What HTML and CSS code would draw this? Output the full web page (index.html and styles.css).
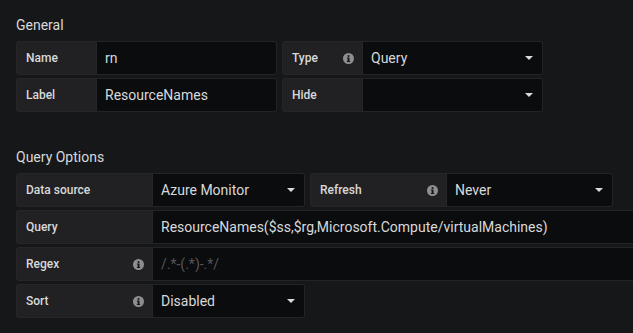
FILE: index.html
```html
<!DOCTYPE html>
<html>
<head>
<meta charset="utf-8">
<link rel="stylesheet" href="styles.css">
</head>
<body>
<div class="page">
  <h5 class="section-title">General</h5>
  <div class="rows">
    <div class="row">
      <div class="field">
        <div class="label w-sm">Name</div>
        <div class="input w-md">rn</div>
      </div>
      <div class="field">
        <div class="label w-sm">Type<svg class="info" viewBox="0 0 11 11"><circle cx="5.5" cy="5.5" r="5.5"/><rect x="4.6" y="4.6" width="1.9" height="4" fill="#161719"/><rect x="3.9" y="8" width="3.3" height="1" fill="#161719"/><rect x="3.9" y="4.6" width="1.5" height="0.9" fill="#161719"/><circle cx="5.55" cy="3" r="1.05" fill="#161719"/></svg></div>
        <div class="input select w-md">Query<svg class="caret" viewBox="0 0 8 4"><polygon points="0,0 8,0 4,4"/></svg></div>
      </div>
    </div>
    <div class="row">
      <div class="field">
        <div class="label w-sm">Label</div>
        <div class="input w-md">ResourceNames</div>
      </div>
      <div class="field">
        <div class="label w-sm">Hide</div>
        <div class="input select w-md"><svg class="caret" viewBox="0 0 8 4"><polygon points="0,0 8,0 4,4"/></svg></div>
      </div>
    </div>
  </div>

  <h5 class="section-title second">Query Options</h5>
  <div class="rows">
    <div class="row">
      <div class="field">
        <div class="label w-lg">Data source</div>
        <div class="input select w-ds">Azure Monitor<svg class="caret" viewBox="0 0 8 4"><polygon points="0,0 8,0 4,4"/></svg></div>
      </div>
      <div class="field">
        <div class="label w-lg">Refresh<svg class="info" viewBox="0 0 11 11"><circle cx="5.5" cy="5.5" r="5.5"/><rect x="4.6" y="4.6" width="1.9" height="4" fill="#161719"/><rect x="3.9" y="8" width="3.3" height="1" fill="#161719"/><rect x="3.9" y="4.6" width="1.5" height="0.9" fill="#161719"/><circle cx="5.55" cy="3" r="1.05" fill="#161719"/></svg></div>
        <div class="input select w-rf">Never<svg class="caret" viewBox="0 0 8 4"><polygon points="0,0 8,0 4,4"/></svg></div>
      </div>
    </div>
    <div class="row">
      <div class="field">
        <div class="label w-lg">Query</div>
        <div class="input w-full">ResourceNames($ss,$rg,Microsoft.Compute/virtualMachines)</div>
      </div>
    </div>
    <div class="row">
      <div class="field">
        <div class="label w-lg">Regex<svg class="info" viewBox="0 0 11 11"><circle cx="5.5" cy="5.5" r="5.5"/><rect x="4.6" y="4.6" width="1.9" height="4" fill="#161719"/><rect x="3.9" y="8" width="3.3" height="1" fill="#161719"/><rect x="3.9" y="4.6" width="1.5" height="0.9" fill="#161719"/><circle cx="5.55" cy="3" r="1.05" fill="#161719"/></svg></div>
        <div class="input w-full placeholder">/.*-(.*)-.*/</div>
      </div>
    </div>
    <div class="row">
      <div class="field">
        <div class="label w-lg">Sort<svg class="info" viewBox="0 0 11 11"><circle cx="5.5" cy="5.5" r="5.5"/><rect x="4.6" y="4.6" width="1.9" height="4" fill="#161719"/><rect x="3.9" y="8" width="3.3" height="1" fill="#161719"/><rect x="3.9" y="4.6" width="1.5" height="0.9" fill="#161719"/><circle cx="5.55" cy="3" r="1.05" fill="#161719"/></svg></div>
        <div class="input select w-ds">Disabled<svg class="caret" viewBox="0 0 8 4"><polygon points="0,0 8,0 4,4"/></svg></div>
      </div>
    </div>
  </div>
</div>
</body>
</html>
```

FILE: styles.css
```css
html, body {
  margin: 0;
  padding: 0;
  background: #161719;
  overflow: hidden;
}
body {
  font-family: Roboto, "Liberation Sans", sans-serif;
  color: #d8d9da;
  width: 633px;
  height: 333px;
}
.page {
  padding: 17px 0 0 16px;
}
.section-title {
  margin: 0 0 7px 0;
  font-size: 14px;
  line-height: 17px;
  font-weight: 400;
  color: #d8d9da;
}
.section-title.second {
  margin-top: 37px;
}
.rows {
  display: flex;
  flex-direction: column;
  gap: 3px;
}
.row {
  display: flex;
  gap: 5px;
}
.field {
  display: flex;
  height: 34px;
}
.label {
  box-sizing: border-box;
  height: 34px;
  display: flex;
  align-items: center;
  justify-content: space-between;
  padding: 0 8px 0 9px;
  background: #212124;
  border: 1px solid #262628;
  border-radius: 3px 0 0 3px;
  font-size: 12px;
  font-weight: 500;
  color: #d8d9da;
}
.input {
  box-sizing: border-box;
  height: 34px;
  display: flex;
  align-items: center;
  justify-content: space-between;
  padding: 0 9px 0 8px;
  background: #0b0c0e;
  border: 1px solid #222426;
  border-left: none;
  border-radius: 0 3px 3px 0;
  font-size: 14px;
  color: #d8d9da;
  white-space: nowrap;
}
.placeholder {
  color: #555558;
}
.w-sm { width: 81px; }
.w-md { width: 180px; }
.w-lg { width: 137px; }
.w-ds { width: 152px; }
.w-rf { width: 166px; }
.w-full { width: 480px; border-right: none; border-radius: 0; }
.select { justify-content: space-between; }
.caret {
  width: 8px;
  height: 4px;
  fill: #d8d9da;
  margin-left: auto;
  flex: none;
}
.info {
  width: 11px;
  height: 11px;
  fill: #8e8e8e;
  flex: none;
}
```
